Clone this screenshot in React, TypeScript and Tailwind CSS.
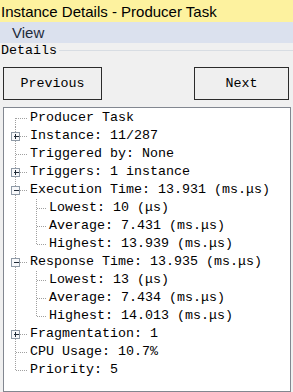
import React from 'react';

type Row = {
  text: string;
  level: 1 | 2;
  box?: '+' | '-';
  lastChild?: boolean;
};

const rows: Row[] = [
  { text: 'Producer Task', level: 1 },
  { text: 'Instance: 11/287', level: 1, box: '+' },
  { text: 'Triggered by: None', level: 1 },
  { text: 'Triggers: 1 instance', level: 1, box: '+' },
  { text: 'Execution Time: 13.931 (ms.μs)', level: 1, box: '-' },
  { text: 'Lowest: 10 (μs)', level: 2 },
  { text: 'Average: 7.431 (ms.μs)', level: 2 },
  { text: 'Highest: 13.939 (ms.μs)', level: 2, lastChild: true },
  { text: 'Response Time: 13.935 (ms.μs)', level: 1, box: '-' },
  { text: 'Lowest: 13 (μs)', level: 2 },
  { text: 'Average: 7.434 (ms.μs)', level: 2 },
  { text: 'Highest: 14.013 (ms.μs)', level: 2, lastChild: true },
  { text: 'Fragmentation: 1', level: 1, box: '+' },
  { text: 'CPU Usage: 10.7%', level: 1 },
  { text: 'Priority: 5', level: 1 },
];

const ROW_H = 18;
const X1 = 11; // level 1 connector column
const T1 = 25; // level 1 text start
const X2 = 32; // level 2 connector column
const T2 = 44; // level 2 text start
const DOT = '#a0a0a0';

// dotted tree connector + expander box for a single row
const Connector: React.FC<{ row: Row; first: boolean; last: boolean }> = ({ row, first, last }) => {
  const mid = ROW_H / 2;
  const w = row.level === 1 ? T1 : T2;
  const v = (x: number, y1: number, y2: number) => (
    <line x1={x + 0.5} y1={y1} x2={x + 0.5} y2={y2} stroke={DOT} strokeDasharray="1 1" shapeRendering="crispEdges" />
  );
  const h = (x1: number, x2: number) => (
    <line x1={x1} y1={mid + 0.5} x2={x2} y2={mid + 0.5} stroke={DOT} strokeDasharray="1 1" shapeRendering="crispEdges" />
  );
  return (
    <svg width={w} height={ROW_H} className="shrink-0">
      {/* level 1 trunk */}
      {v(X1, first ? mid : 0, last ? mid + 1 : ROW_H)}
      {row.level === 1 && h(row.box ? X1 + 5 : X1 + 1, T1 - 1)}
      {row.level === 2 && (
        <>
          {v(X2, 0, row.lastChild ? mid + 1 : ROW_H)}
          {h(X2 + 1, T2 - 1)}
        </>
      )}
      {row.box && (
        <g shapeRendering="crispEdges">
          <rect x={X1 - 3.5} y={mid - 3.5} width={8} height={8} fill="#f7f8fa" stroke="#8f9aa6" />
          <line x1={X1 - 1} y1={mid + 0.5} x2={X1 + 4} y2={mid + 0.5} stroke="#1f2a36" />
          {row.box === '+' && <line x1={X1 + 0.5} y1={mid - 2} x2={X1 + 0.5} y2={mid + 3} stroke="#1f2a36" />}
        </g>
      )}
    </svg>
  );
};

export default function App() {
  const mono = { fontFamily: '"Liberation Mono", "DejaVu Sans Mono", monospace' };
  return (
    <div className="w-[293px] h-[392px] overflow-hidden bg-[#f0f0f0] flex flex-col text-black">
      {/* window title */}
      <div className="h-[22px] shrink-0 bg-[#fdf29f] flex items-center pl-[1px] text-[15px] leading-none" style={{ fontFamily: '"Liberation Sans", Arial, sans-serif' }}>
        Instance Details - Producer Task
      </div>

      {/* menu */}
      <div className="h-[21px] shrink-0 bg-[#dbe1ee] flex items-center pl-[12px] text-[15px] leading-none text-[#1e2b3c]" style={{ fontFamily: '"Liberation Sans", Arial, sans-serif' }}>
        View
      </div>

      {/* group box header */}
      <div className="h-[15px] shrink-0 flex items-center text-[13.33px] leading-none" style={mono}>
        <span className="pl-[1px] pr-[2px]">Details</span>
        <div className="flex-1 h-px bg-[#d8dde3]" />
      </div>

      {/* nav buttons */}
      <div className="flex justify-between pt-[9px] pl-[3px] pr-[4px] text-[13.33px]" style={mono}>
        <button className="w-[99px] h-[33px] border border-[#2b2b2b] bg-[#efefef] flex items-center justify-center">Previous</button>
        <button className="w-[95px] h-[33px] border border-[#2b2b2b] bg-[#efefef] flex items-center justify-center">Next</button>
      </div>

      {/* tree view */}
      <div className="mt-[7px] ml-[3px] mr-[2px] flex-1 bg-white border border-[#828790] pt-[1px] text-[13.33px]" style={mono}>
        {rows.map((row, i) => (
          <div key={i} className="flex h-[18px] items-center whitespace-nowrap leading-[18px]">
            <Connector row={row} first={i === 0} last={i === rows.length - 1} />
            <span className="pl-[1px]">{row.text}</span>
          </div>
        ))}
      </div>
    </div>
  );
}
